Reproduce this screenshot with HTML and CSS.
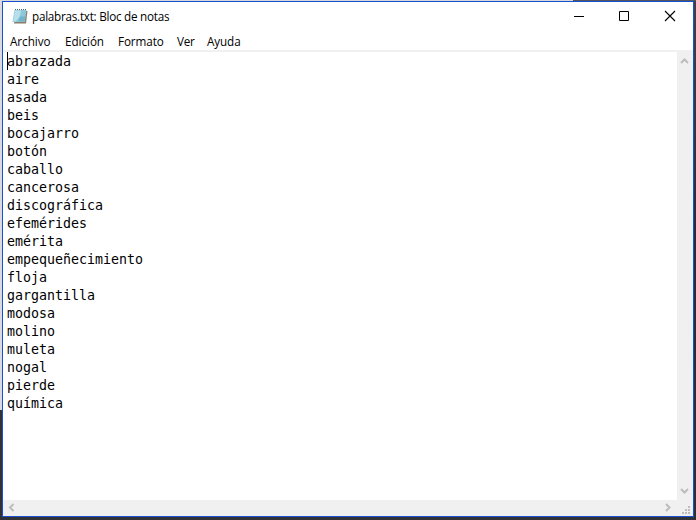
FILE: index.html
```html
<!DOCTYPE html>
<html lang="es">
<head>
<meta charset="utf-8">
<title>palabras.txt: Bloc de notas</title>
<link rel="stylesheet" href="styles.css">
</head>
<body>
<main class="window">
  <header class="titlebar">
    <svg class="app-icon" width="16" height="16" viewBox="0 0 16 16">
      <path d="M4 3h11.500l-1.500 12.500H2z" fill="#8b7d68"/>
      <path d="M2.500 2h12l-1.600 12H.5z" fill="#8fc7d9"/>
      <path d="M3 2.500h6L7 13.500H1z" fill="#b5dfea"/>
      <path d="M8 8.500h5.200l-.6 5H4z" fill="#58a5bd" opacity=".55"/>
      <path d="M3 1.500h12" stroke="#4b646e" stroke-dasharray="1 1"/>
    </svg>
    <h1 class="title">palabras.txt: Bloc de notas</h1>
    <div class="controls">
      <svg width="46" height="29" viewBox="0 0 46 29"><path d="M18 14.500h10" stroke="#000"/></svg>
      <svg width="46" height="29" viewBox="0 0 46 29"><path d="M17.500 9.500h9v9h-9z" fill="none" stroke="#000"/></svg>
      <svg width="46" height="29" viewBox="0 0 46 29"><path d="M17 9l10 10M27 9L17 19" stroke="#000" stroke-width="1.1"/></svg>
    </div>
  </header>
  <nav class="menubar">
    <span class="archivo">Archivo</span><span class="edicion">Edición</span><span class="formato">Formato</span><span class="ver">Ver</span><span class="ayuda">Ayuda</span>
  </nav>
  <section class="editor">
    <pre class="text">abrazada
aire
asada
beis
bocajarro
botón
caballo
cancerosa
discográfica
efemérides
emérita
empequeñecimiento
floja
gargantilla
modosa
molino
muleta
nogal
pierde
química</pre>
    <div class="scroll vertical">
      <svg width="16" height="16" viewBox="0 0 16 16"><path d="M4 11l3.500-3.500L11 11" /></svg>
      <svg width="16" height="16" viewBox="0 0 16 16"><path d="M4 5l3.500 3.500L11 5" /></svg>
    </div>
    <div class="scroll horizontal">
      <svg width="16" height="16" viewBox="0 0 16 16"><path d="M10.500 4L7 7.500l3.500 3.500" /></svg>
      <svg width="16" height="16" viewBox="0 0 16 16"><path d="M5 4l3.500 3.500L5 11" /></svg>
    </div>
    <svg class="grip" width="16" height="16" viewBox="0 0 16 16"><path d="M11 6h2v2h-2zM8 9h2v2H8zM11 9h2v2h-2zM5 12h2v2H5zM8 12h2v2H8zM11 12h2v2h-2z" fill="#bdbdbd"/></svg>
  </section>
</main>
</body>
</html>
```
FILE: styles.css
```css
* { box-sizing: border-box; }
body {
  margin: 0;
  width: 696px;
  height: 520px;
  padding: 1px 2px 3px;
  overflow: hidden;
  background:
    linear-gradient(#d9dbe1, #d9dbe1) 0 0 / 2px 410px no-repeat,
    linear-gradient(90deg, #d8d8d8 573px, #51545b 573px) 0 0 / 100% 1px no-repeat,
    linear-gradient(#3d4047, #252b37 45%, #2c2e31) 100% 0 / 2px 100% no-repeat,
    #303236;
  color: #000;
}
.window {
  display: flex;
  flex-direction: column;
  height: 516px;
  border: 1px solid #1850d2;
  background: #fff;
}
.titlebar { display: flex; height: 30px; padding-left: 9px; }
.app-icon { margin: 6px 4px 0 0; }
.title {
  margin: 0;
  font: 11.7px/28px "Open Sans", "Noto Sans", sans-serif;
  letter-spacing: -.25px;
  white-space: nowrap;
}
.controls { display: flex; margin: 0 -1px 0 auto; }
.menubar {
  display: flex;
  height: 18px;
  font: 11.7px/18px "Open Sans", "Noto Sans", sans-serif;
  white-space: nowrap;
}
.menubar span { padding-left: 7px; }
.archivo { width: 55px; letter-spacing: -.03px; }
.edicion { width: 53px; letter-spacing: -.05px; }
.formato { width: 59px; letter-spacing: -.1px; }
.ver { width: 30px; letter-spacing: -.3px; }
.ayuda { letter-spacing: -.1px; }
.editor {
  flex: 1;
  display: grid;
  grid-template: 448px 16px / 674px 16px;
  border-top: 2px solid #f0f0f0;
  background: #f0f0f0;
}
.text {
  position: relative;
  margin: 0;
  padding: 1px 0 0 4px;
  background: #fff;
  font: 13.29px/18px "DejaVu Sans Mono", monospace;
}
.text::before {
  content: "";
  position: absolute;
  left: 4px;
  top: 0;
  width: 1px;
  height: 18px;
  background: #000;
}
.scroll { display: flex; justify-content: space-between; }
.vertical { flex-direction: column; }
.scroll path { fill: none; stroke: #bdbdbd; stroke-width: 2; }
```
